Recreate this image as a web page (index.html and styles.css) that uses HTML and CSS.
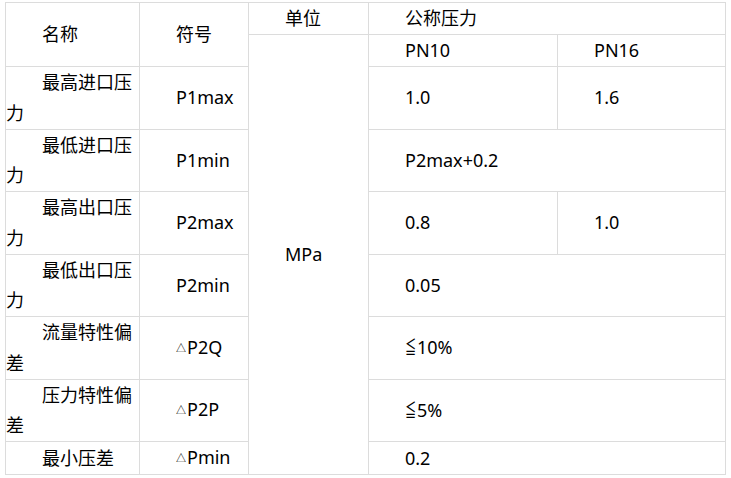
FILE: index.html
```html
<!DOCTYPE html>
<html lang="zh">
<head>
<meta charset="utf-8">
<title>参数表</title>
<link rel="stylesheet" href="styles.css">
</head>
<body>
<table class="spec">
  <colgroup>
    <col class="c-name">
    <col class="c-sym">
    <col class="c-unit">
    <col class="c-pn10">
    <col class="c-pn16">
  </colgroup>
  <tr class="single">
    <td rowspan="2">名称</td>
    <td rowspan="2">符号</td>
    <td>单位</td>
    <td colspan="2">公称压力</td>
  </tr>
  <tr class="single">
    <td rowspan="8">MPa</td>
    <td>PN10</td>
    <td>PN16</td>
  </tr>
  <tr>
    <td>最高进口压力</td>
    <td>P1max</td>
    <td>1.0</td>
    <td>1.6</td>
  </tr>
  <tr>
    <td>最低进口压力</td>
    <td>P1min</td>
    <td colspan="2">P2max+0.2</td>
  </tr>
  <tr>
    <td>最高出口压力</td>
    <td>P2max</td>
    <td>0.8</td>
    <td>1.0</td>
  </tr>
  <tr>
    <td>最低出口压力</td>
    <td>P2min</td>
    <td colspan="2">0.05</td>
  </tr>
  <tr>
    <td>流量特性偏差</td>
    <td><span class="tri">△</span>P2Q</td>
    <td colspan="2"><span class="le">≦</span>10%</td>
  </tr>
  <tr>
    <td>压力特性偏差</td>
    <td><span class="tri">△</span>P2P</td>
    <td colspan="2"><span class="le">≦</span>5%</td>
  </tr>
  <tr class="single">
    <td>最小压差</td>
    <td><span class="tri">△</span>Pmin</td>
    <td colspan="2">0.2</td>
  </tr>
</table>
</body>
</html>
```

FILE: styles.css
```css
html, body {
  margin: 0;
  padding: 0;
  background: #ffffff;
}

body {
  padding: 2px 0 0 5px;
  font-family: "Noto Sans", "Noto Sans CJK SC", sans-serif;
  font-size: 18px;
  color: #000000;
}

.spec {
  border-collapse: collapse;
  table-layout: fixed;
  width: 720px;
}

.c-name { width: 134px; }
.c-sym { width: 109px; }
.c-unit { width: 120px; }
.c-pn10 { width: 189px; }
.c-pn16 { width: 168px; }

.spec td {
  border: 1px solid #dcdcdc;
  padding: 0;
  line-height: 30.75px;
  text-indent: 2em;
  text-align: left;
  vertical-align: middle;
  word-break: break-all;
}

.spec tr.single {
  height: 32px;
}

.tri {
  font-size: 10px;
  vertical-align: 2px;
  margin-right: 1px;
}

.le {
  display: inline-block;
  width: 12px;
  text-indent: 0;
  transform: scaleX(0.62);
  transform-origin: left center;
}
```
